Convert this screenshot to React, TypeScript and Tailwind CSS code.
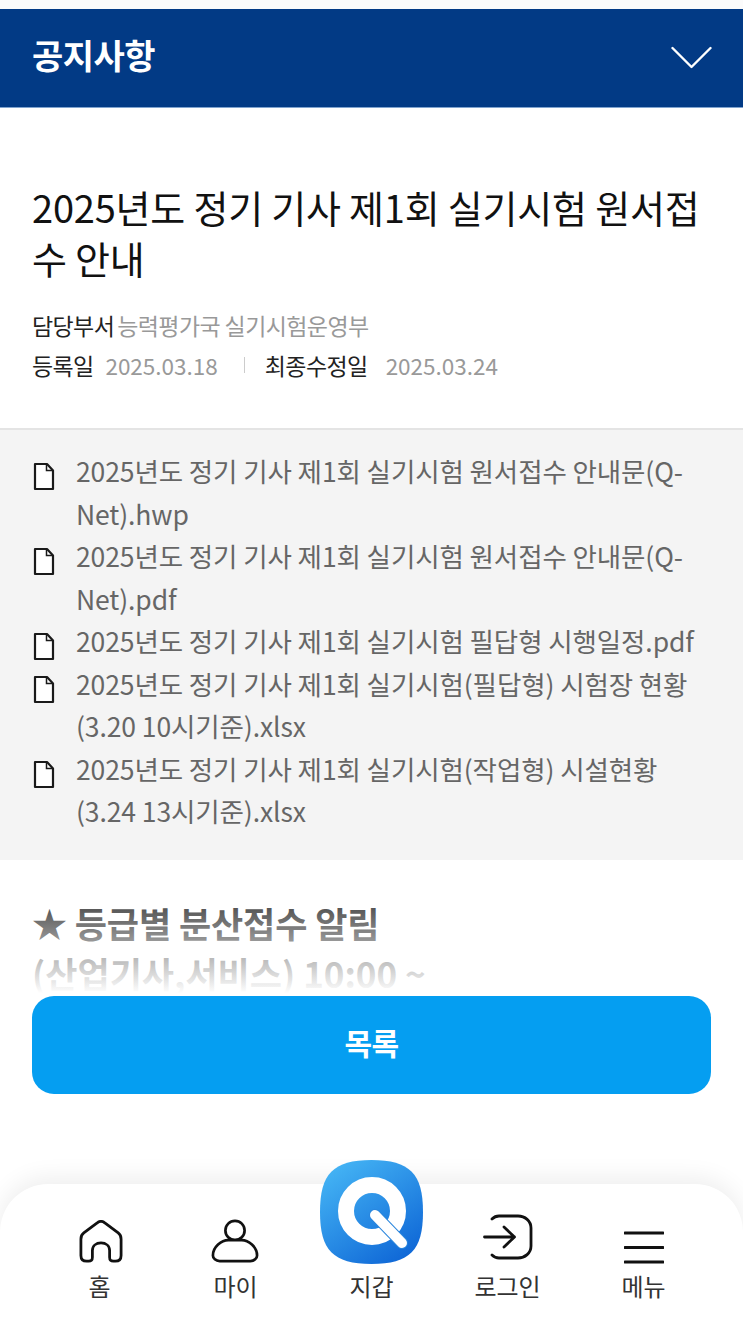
const FONT = "font-['Noto_Sans_CJK_KR','Noto_Sans',sans-serif]";

const files = [
  ["2025년도 정기 기사 제1회 실기시험 원서접수 안내문(Q-", "Net).hwp"],
  ["2025년도 정기 기사 제1회 실기시험 원서접수 안내문(Q-", "Net).pdf"],
  ["2025년도 정기 기사 제1회 실기시험 필답형 시행일정.pdf"],
  ["2025년도 정기 기사 제1회 실기시험(필답형) 시험장 현황", "(3.20 10시기준).xlsx"],
  ["2025년도 정기 기사 제1회 실기시험(작업형) 시설현황", "(3.24 13시기준).xlsx"],
];

function FileIcon() {
  return (
    <svg width="22" height="29" viewBox="0 0 22 29" fill="none" className="shrink-0 mt-[12px]">
      <path d="M2 2h12l6 6.500V27H2V2Z" fill="#fff" stroke="#1a1a1a" strokeWidth="2.200" strokeLinejoin="round" />
      <path d="M13.500 2.500V8.500H20" stroke="#1a1a1a" strokeWidth="1.500" />
    </svg>
  );
}

function NavItem({ label, icon, up = false }: { label: string; icon: React.ReactNode; up?: boolean }) {
  return (
    <div className="w-[136px] flex flex-col items-center">
      <div className={`h-[76px] flex items-end justify-center ${up ? "pb-[4px]" : ""}`}>{icon}</div>
      <span className="mt-[5px] text-[24px] leading-[34px] text-[#333]">{label}</span>
    </div>
  );
}

export default function App() {
  return (
    <div className={`${FONT} relative w-[743px] h-[1326px] overflow-hidden bg-white flex flex-col`}>
      <div className="h-[9px] shrink-0 bg-[#fbfbfb]" />
      <header className="h-[99px] shrink-0 bg-[#023a85] flex items-center justify-between pl-[32px] pr-[31px] border-b border-[#7fa3cf]">
        <h1 className="text-[34px] font-bold text-white tracking-[-0.5px] -mt-[8px]">공지사항</h1>
        <svg width="41" height="24" viewBox="0 0 41 24" fill="none">
          <path d="M1.500 2 20.500 21 39.500 2" stroke="#fff" strokeWidth="2.400" strokeLinecap="round" strokeLinejoin="round" />
        </svg>
      </header>

      <section className="h-[322px] shrink-0 px-[32px] pt-[73px] border-b-2 border-[#e4e4e4]">
        <h2 className="text-[38px] leading-[51px] text-[#111] tracking-[-0.2px]">
          2025년도 정기 기사 제1회 실기시험 원서접수 안내
        </h2>
        <div className="mt-[23px] text-[23px] leading-[38px] text-[#222] flex gap-[3px]">
          <span className="tracking-[-0.6px]">담당부서</span>
          <span className="text-[#999] tracking-[-0.6px]">능력평가국 실기시험운영부</span>
        </div>
        <div className="mt-[2px] text-[23px] leading-[38px] text-[#222] flex items-center">
          <span className="tracking-[-0.7px]">등록일</span>
          <span className="ml-[12px] text-[#999] text-[22.5px]">2025.03.18</span>
          <span className="ml-[26px] w-px h-[16px] bg-[#ccc]" />
          <span className="ml-[20px] tracking-[-0.6px]">최종수정일</span>
          <span className="ml-[18px] text-[#999] text-[22.5px]">2025.03.24</span>
        </div>
      </section>

      <section className="h-[430px] shrink-0 bg-[#f4f4f4] pt-[20px] pl-[33px] pr-[20px] flex flex-col">
        {files.map((f, i) => (
          <div key={i} className="flex gap-[21px]">
            <FileIcon />
            <div className="text-[26.5px] leading-[42.5px] text-[#666] whitespace-nowrap tracking-[-0.1px]">
              {f.map((line) => (
                <div key={line}>{line}</div>
              ))}
            </div>
          </div>
        ))}
      </section>

      <section className="relative h-[136px] shrink-0 overflow-hidden px-[32px] pt-[38px]">
        <p className="text-[35px] leading-[50px] font-bold text-[#555] tracking-[-0.1px]">★ 등급별 분산접수 알림</p>
        <p className="text-[35px] leading-[50px] font-bold text-[#555]">(산업기사,서비스) 10:00 ~</p>
        <div className="absolute inset-0 bg-gradient-to-b from-white/0 from-35% to-white to-98%" />
      </section>

      <div className="px-[32px] shrink-0">
        <button className="w-full h-[98px] rounded-[22px] bg-[#059ef1] text-white text-[30px] font-bold tracking-[-0.5px] pb-[6px]">
          목록
        </button>
      </div>

      <nav className="absolute left-0 right-0 bottom-0 h-[142px] rounded-t-[48px] bg-white shadow-[0_-6px_24px_rgba(0,0,0,0.07)] flex justify-center pt-[4px]">
        <NavItem
          label="홈"
          icon={
            <svg width="44" height="44" viewBox="0 0 46 46" fill="none" className="ml-[3px]">
              <path d="M8 43c-4 0-6-2-6-6V20c0-3 1-5 3-6.500L19 3c2.500-2 5.500-2 8 0l14 10.500c2 1.500 3 3.500 3 6.500v17c0 4-2 6-6 6h-2c-3 0-4-1-4-4v-7c0-5-4-8-9-8s-9 3-9 8v7c0 3-1 4-4 4H8Z" stroke="#111" strokeWidth="2.900" strokeLinejoin="round" />
            </svg>
          }
        />
        <NavItem
          label="마이"
          icon={
            <svg width="48" height="46" viewBox="0 0 50 46" fill="none" className="-ml-[1px]">
              <circle cx="25" cy="12" r="10" stroke="#111" strokeWidth="2.800" />
              <path d="M9 44h32c4 0 7-3 7-6 0-9-9-16-16-16H18C11 22 2 29 2 38c0 3 3 6 7 6Z" fill="#fff" stroke="#111" strokeWidth="2.800" />
            </svg>
          }
        />
        <div className="w-[136px] flex flex-col items-center">
          <div className="h-[76px]" />
          <span className="mt-[5px] text-[24px] leading-[34px] text-[#333]">지갑</span>
        </div>
        <NavItem
          label="로그인"
          up
          icon={
            <svg width="50" height="46" viewBox="0 0 50 46" fill="none">
              <path d="M9 5c2-2 4-3 7-3h19c7 0 13 5 13 12v18c0 7-6 12-13 12H16c-3 0-5-1-7-3" stroke="#111" strokeWidth="2.800" strokeLinecap="round" />
              <path d="M1.500 23h30M21 13l10.500 10L21 33" stroke="#111" strokeWidth="2.800" strokeLinecap="round" strokeLinejoin="round" />
            </svg>
          }
        />
        <NavItem
          label="메뉴"
          icon={
            <svg width="40" height="33" viewBox="0 0 40 33" fill="none">
              <path d="M1 2h38M1 16.500h38M1 31h38" stroke="#111" strokeWidth="3" strokeLinecap="round" />
            </svg>
          }
        />
      </nav>

      <svg className="absolute left-[320px] top-[1160px]" width="103" height="104" viewBox="0 0 103 104">
        <defs>
          <linearGradient id="qg" x1="0.1" y1="0" x2="0.8" y2="1">
            <stop offset="0" stopColor="#47b8f6" />
            <stop offset="1" stopColor="#0e66d6" />
          </linearGradient>
        </defs>
        <path d="M51.500 0C90 0 103 14 103 52s-13 52-51.500 52S0 90 0 52 13 0 51.500 0Z" fill="url(#qg)" />
        <circle cx="52" cy="51" r="26" fill="none" stroke="#fff" strokeWidth="16" />
        <path d="M55 55 82 83" stroke="#2a86dd" strokeWidth="12" strokeLinecap="round" />
        <path d="M55 55 82 83" stroke="#fff" strokeWidth="10" strokeLinecap="round" />
      </svg>
    </div>
  );
}
